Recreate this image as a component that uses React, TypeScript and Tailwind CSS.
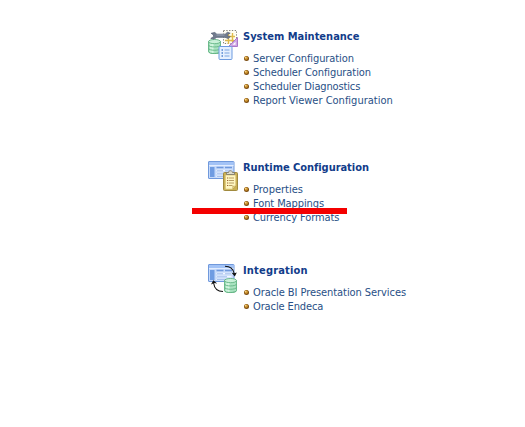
import type { ReactNode } from "react";

function WindowPane() {
  return (
    <g>
      <rect x="0.5" y="0.5" width="25.5" height="17" rx="0.5" fill="#c6dafa" stroke="#7099dc" />
      <rect x="1" y="1" width="24.5" height="3" fill="#a3c3f6" />
      <rect x="1" y="4" width="24.5" height="1" fill="#e2edff" />
      <rect x="2" y="6" width="4.5" height="10" fill="#6f9ce2" />
      <path d="M8.5 6.5h7M17 6.5h7" stroke="#6f99dd" strokeWidth="1.4" />
      <path d="M8.5 9.5h15M8.5 12.5h15M8.5 15.5h12" stroke="#f5f9ff" strokeWidth="1.6" />
      <path d="M9 9.7h6M17 9.7h6M9 12.7h10M9 15.5h9" stroke="#86abe5" strokeWidth="0.7" />
    </g>
  );
}

function Cylinder() {
  return (
    <g stroke="#62b483" strokeWidth="0.9">
      <path d="M0.5 2.5v10c0 2.7 12 2.7 12 0v-10z" fill="#a9e2c0" />
      <path d="M3 4v10M4.8 4v10" stroke="#dcf9e7" strokeWidth="1.4" />
      <ellipse cx="6.5" cy="2.6" rx="6" ry="2.1" fill="#cbf1da" />
      <path d="M0.5 6c0 2.6 12 2.6 12 0M0.5 9.3c0 2.6 12 2.6 12 0M0.5 12.5c0 2.7 12 2.7 12 0" fill="none" />
    </g>
  );
}

function MaintenanceIcon() {
  return (
    <svg width="31" height="31" viewBox="0 0 31 31">
      <rect x="15.5" y="0.5" width="13" height="13" fill="#fffdf0" stroke="#77736b" strokeWidth="0.9" strokeDasharray="1.3 1.5" />
      <path d="M20.5 4v10M24.5 3v9M17 6.5h10M17 10.5h9" stroke="#dfba4a" strokeWidth="1.4" />
      <path d="M29.5 7.5v9h-9z" fill="#cda5e4" stroke="#aa78c9" />
      <path d="M27.5 11.8v2.9h-3z" fill="#fff" />
      <g transform="translate(0 9)"><Cylinder /></g>
      <path d="M3.2 3.3 6.8 2.5l2 1.7h8.4L19.4 2.3l2.8.9-2.7 1.3.2 1.7 2.6.3-2 2-3.3-1.2H8.8L6 9.1 2.8 8.4l2.8-1.7-.1-1.8z" fill="#727c8f" stroke="#596478" strokeWidth="0.8" />
      <path d="M8.5 5h8" stroke="#a8b2c2" strokeWidth="0.8" />
      <rect x="11" y="16.5" width="13" height="13" rx="1" fill="#e5f0ff" stroke="#6d9be0" />
      <path d="M13.5 20h1.5M13.5 23h1.5M13.5 26h1.5" stroke="#4f82cf" strokeWidth="1.3" />
      <path d="M16.5 20h5M16.5 23h5M16.5 26h5" stroke="#7ba4df" />
    </svg>
  );
}

function RuntimeIcon() {
  return (
    <svg width="31" height="31" viewBox="0 0 31 31">
      <WindowPane />
      <rect x="15.5" y="11.5" width="14" height="18" rx="1" fill="#cbb155" stroke="#a18a3e" />
      <path d="M17.3 14h10.5v11.2l-3 3h-7.5z" fill="#fff7c3" stroke="#c9b25d" strokeWidth="0.6" />
      <path d="M27.8 25.2h-3v3z" fill="#ead78b" stroke="#aa8d37" strokeWidth="0.5" />
      <path d="M18.5 13.5v-2h2c0-2.4 4-2.4 4 0h2v2z" fill="#dedcca" stroke="#77756a" strokeWidth="0.8" />
      <path d="M19 17h1.3M19 19.5h1.3M19 22h1.3M19 24.5h1.3" stroke="#9b6535" strokeWidth="1" />
      <path d="M21 17h5M21 19.5h5M21 22h5M21 24.5h3.5" stroke="#b0935a" strokeWidth="0.9" />
    </svg>
  );
}

function IntegrationIcon() {
  return (
    <svg width="31" height="31" viewBox="0 0 31 31">
      <WindowPane />
      <g transform="translate(16 14)"><Cylinder /></g>
      <path d="M17 2.2c5 0 8.4 2.8 9.4 7.8M15 27.5c-5.2 0-8.6-2.7-9.4-8.5" stroke="#111" strokeWidth="1.1" fill="none" />
      <path d="m23.6 8.8 3.2 3.7 2-4-2.4.8zM3 20.5l2.3-4.3 3.9 3.4-3.1-.7z" fill="#111" />
    </svg>
  );
}

function Bullet() {
  return (
    <svg className="mb-px shrink-0" width="5" height="5" viewBox="0 0 5 5">
      <circle cx="2.5" cy="2.5" r="2.5" fill="#7b4c10" />
      <circle cx="2.3" cy="2.1" r="1.8" fill="#c88e2b" />
      <circle cx="1.7" cy="1.6" r="0.9" fill="#f6d486" />
    </svg>
  );
}

type Item = { label: string; spacing: string };

function Section({ title, titleSpacing, icon, items }: { title: string; titleSpacing: string; icon: ReactNode; items: Item[] }) {
  return (
    <section className="flex">
      <div className="w-[35px] shrink-0">{icon}</div>
      <div>
        <h2 className={`h-[14px] whitespace-nowrap text-[11px] leading-[14px] font-bold text-[#123c8a] ${titleSpacing}`}>{title}</h2>
        <ul className="mt-2 pl-px">
          {items.map((item) => (
            <li key={item.label} className="flex h-[14px] items-center gap-1">
              <Bullet />
              <a className={`whitespace-nowrap text-[11px] leading-[14px] text-[#284f86] ${item.spacing}`}>{item.label}</a>
            </li>
          ))}
        </ul>
      </div>
    </section>
  );
}

export default function App() {
  return (
    <main className="relative h-[427px] w-[525px] overflow-hidden bg-white pl-[208px] pt-[30px] font-['DejaVu_Sans_Condensed','DejaVu_Sans',sans-serif] [font-stretch:condensed] [font-variant-ligatures:none]">
      <div className="h-[131px]">
        <Section title="System Maintenance" titleSpacing="tracking-normal" icon={<MaintenanceIcon />} items={[
          { label: "Server Configuration", spacing: "tracking-[-0.09px]" },
          { label: "Scheduler Configuration", spacing: "tracking-[-0.08px]" },
          { label: "Scheduler Diagnostics", spacing: "tracking-[-0.14px]" },
          { label: "Report Viewer Configuration", spacing: "tracking-normal" },
        ]} />
      </div>
      <div className="h-[103px]">
        <Section title="Runtime Configuration" titleSpacing="tracking-[-0.04px]" icon={<RuntimeIcon />} items={[
          { label: "Properties", spacing: "tracking-normal" },
          { label: "Font Mappings", spacing: "tracking-[-0.1px]" },
          { label: "Currency Formats", spacing: "tracking-[-0.08px]" },
        ]} />
      </div>
      <Section title="Integration" titleSpacing="tracking-[0.18px]" icon={<IntegrationIcon />} items={[
        { label: "Oracle BI Presentation Services", spacing: "tracking-[-0.07px]" },
        { label: "Oracle Endeca", spacing: "tracking-[-0.12px]" },
      ]} />
      <div className="absolute left-[192px] top-[208px] h-[6px] w-[155px] bg-[#f40000]" />
    </main>
  );
}
